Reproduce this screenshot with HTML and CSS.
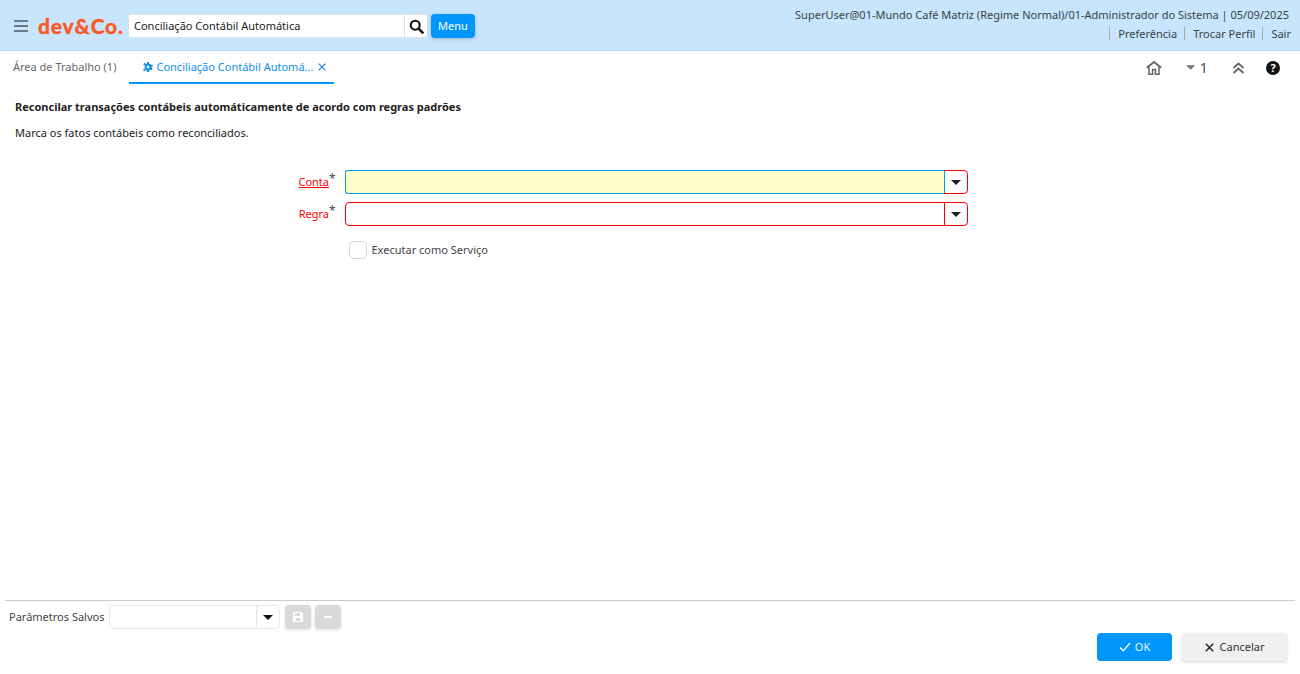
FILE: index.html
```html
<!DOCTYPE html>
<html lang="pt-BR">
<head>
<meta charset="utf-8">
<title>Conciliação Contábil Automática</title>
<link rel="stylesheet" href="styles.css">
</head>
<body>
<header class="topbar">
  <div class="top-left">
    <button class="burger" aria-label="Menu"><svg width="14" height="12" viewBox="0 0 14 12"><path d="M0 1h14M0 6h14M0 11h14" stroke="#4a5560" stroke-width="1.7"/></svg></button>
    <span class="logo">dev&amp;Co.</span>
    <div class="search">
      <span class="search-text">Conciliação Contábil Automática</span>
      <span class="search-btn"><svg width="15" height="15" viewBox="0 0 15 15"><circle cx="6.200" cy="6.200" r="4.500" fill="none" stroke="#111" stroke-width="2.100"/><path d="M9.600 9.600l4 4" stroke="#111" stroke-width="2.600" stroke-linecap="round"/></svg></span>
    </div>
    <button class="menu-btn">Menu</button>
  </div>
  <div class="top-right">
    <div class="user-line">SuperUser@01-Mundo Café Matriz (Regime Normal)/01-Administrador do Sistema | 05/09/2025</div>
    <nav class="links"><a>Preferência</a><a>Trocar Perfil</a><a>Sair</a></nav>
  </div>
</header>
<div class="tabbar">
  <div class="tabs">
    <div class="tab">Área de Trabalho (1)</div>
    <div class="tab tab-active">
      <svg class="gear" width="10" height="10" viewBox="0 0 10 10"><g fill="#0d8fe8"><circle cx="5" cy="5" r="3.400"/><path d="M4 0h2v2H4zM4 8h2v2H4zM.2 2.500l1-1.700 1.800 1-1 1.700zM7 7.200l1-1.700 1.800 1-1 1.700zM0 7.500L1 9.200l1.800-1-1-1.700zM7.200 3.500l1 1.700 1.800-1-1-1.700z"/></g><circle cx="5" cy="5" r="1.400" fill="#fff"/></svg>
      <span class="tab-label">Conciliação Contábil Automá...</span>
      <svg class="tab-x" width="8" height="8" viewBox="0 0 8 8"><path d="M.6.6l6.800 6.800M7.400.6L.6 7.400" stroke="#2a7fd8" stroke-width="1.200"/></svg>
    </div>
  </div>
  <div class="tab-tools">
    <svg class="home" width="16" height="14" viewBox="0 0 16 14"><path d="M.8 6.800L8 1l7.200 5.800" fill="none" stroke="#666" stroke-width="1.900"/><path d="M3 6v7.300h3.600V8.600h2.800v4.700H13V6" fill="none" stroke="#666" stroke-width="1.500"/></svg>
    <span class="count"><svg width="10" height="5" viewBox="0 0 10 5"><path d="M0 0h10L5 5z" fill="#777"/></svg><span>1</span></span>
    <svg width="13" height="12" viewBox="0 0 13 12"><path d="M1.500 6l5-4.500 5 4.500M1.500 11l5-4.500 5 4.500" fill="none" stroke="#666" stroke-width="1.800"/></svg>
    <span class="help">?</span>
  </div>
</div>
<main class="content">
  <h1 class="title">Reconcilar transações contábeis automáticamente de acordo com regras padrões</h1>
  <p class="desc">Marca os fatos contábeis como reconciliados.</p>
  <form class="form">
    <div class="row">
      <label class="lbl"><u>Conta</u><sup>*</sup></label>
      <div class="combo combo-focus"><span class="combo-input"></span><span class="combo-btn"><i class="caret"></i></span></div>
    </div>
    <div class="row">
      <label class="lbl">Regra<sup>*</sup></label>
      <div class="combo"><span class="combo-input"></span><span class="combo-btn"><i class="caret"></i></span></div>
    </div>
    <div class="check-row"><span class="check"></span><span class="check-label">Executar como Serviço</span></div>
  </form>
</main>
<footer class="footer">
  <div class="saved">
    <span class="saved-label">Parâmetros Salvos</span>
    <div class="saved-combo"><span class="saved-input"></span><span class="saved-btn"><i class="caret"></i></span></div>
    <span class="mini"><svg width="10" height="10" viewBox="0 0 10 10"><path fill="#fff" fill-rule="evenodd" d="M0 0h8l2 2v8H0zM2 1v3h5V1zM2.500 6v3h5V6z"/></svg></span>
    <span class="mini"><svg width="8" height="2" viewBox="0 0 8 2"><path d="M0 0h8v2H0z" fill="#fff"/></svg></span>
  </div>
  <div class="actions">
    <button class="btn btn-ok"><svg width="12" height="10" viewBox="0 0 12 10"><path d="M1 5.500l3.300 3.300L11 1" fill="none" stroke="#fff" stroke-width="1.300"/></svg><span>OK</span></button>
    <button class="btn btn-cancel"><svg width="9" height="9" viewBox="0 0 9 9"><path d="M.8.8l7.400 7.400M8.200.8L.8 8.200" stroke="#222" stroke-width="1.400"/></svg><span>Cancelar</span></button>
  </div>
</footer>
</body>
</html>
```
FILE: styles.css
```css
* { box-sizing: border-box; }
html, body { margin: 0; height: 100%; }
body {
  display: flex;
  flex-direction: column;
  height: 674px;
  overflow: hidden;
  background: #fff;
  color: #333;
  font: 11px/15px "Noto Sans", sans-serif;
}
button { font: inherit; border: 0; padding: 0; cursor: pointer; }

.topbar {
  flex: none;
  height: 51px;
  display: flex;
  justify-content: space-between;
  background: #c7e6fe;
  border-bottom: 1px solid #a9d9fd;
  padding: 0 11px 0 14px;
}
.top-left { display: flex; align-items: center; height: 50px; padding-top: 2px; }
.burger { display: flex; background: none; width: 14px; height: 12px; margin-right: 10px; }
.logo {
  font: 900 21px/24px Lato, sans-serif;
  color: #fa5a28;
  width: 90px;
  letter-spacing: .8px;
  -webkit-text-stroke: .3px #fa5a28;
}
.search {
  display: flex;
  width: 300px;
  height: 24px;
  background: #fff;
  border: 1px solid #e2e2e2;
  border-radius: 3px;
}
.search-text { flex: 1; padding-left: 5px; line-height: 22px; color: #222; }
.search-btn { width: 23px; display: flex; align-items: center; justify-content: center; border-left: 1px solid #ddd; }
.menu-btn {
  margin-left: 3px;
  width: 44px;
  height: 24px;
  padding-bottom: 2px;
  background: #0096fd;
  color: #fff;
  border-radius: 4px;
  box-shadow: 0 1px 4px rgba(0,0,0,.2);
}
.top-right { display: flex; flex-direction: column; align-items: flex-end; padding-top: 7px; color: #3a3f44; }
.user-line { height: 19px; }
.links { display: flex; margin-right: -2px; }
.links a { padding-left: 8px; margin-left: 7px; border-left: 1px solid #aaa; height: 13px; line-height: 13px; margin-top: 1px; }

.tabbar {
  flex: none;
  height: 33px;
  display: flex;
  justify-content: space-between;
  padding: 0 20px 0 13px;
}
.tabs { display: flex; }
.tab { color: #666; height: 33px; line-height: 31px; margin-right: 13px; white-space: nowrap; }
.tab-active {
  display: flex;
  align-items: center;
  gap: 3px;
  width: 205px;
  padding: 0 7px 0 14px;
  color: #0d8fe8;
  border-bottom: 2px solid #0096fd;
}
.gear { flex: none; }
.tab-label { flex: none; }
.tab-x { flex: none; margin-left: 2px; }
.tab-tools { display: flex; align-items: center; color: #555; height: 33px; }
.home { margin-right: 24px; margin-left: -1px; }
.count { display: flex; align-items: center; gap: 4px; font-size: 15px; margin-right: 24px; width: 22px; }
.help {
  margin-left: 21px;
  width: 14px;
  height: 14px;
  border-radius: 50%;
  background: #111;
  color: #fff;
  font: 700 11px/14px "Noto Sans", sans-serif;
  text-align: center;
}

.content { flex: 1; padding: 0 15px; }
.title { margin: 15px 0 0; font-size: 11px; line-height: 15px; font-weight: 700; color: #222; }
.desc { margin: 11px 0 0; color: #222; }
.form { margin-top: 30px; }
.row { display: flex; align-items: center; height: 24px; margin-bottom: 8px; }
.lbl { width: 330px; padding: 0 16px 2px 0; text-align: right; color: #f00; position: relative; }
.lbl sup { position: absolute; left: 314px; top: -3px; color: #444; font-size: 12px; line-height: 15px; vertical-align: baseline; }
.combo {
  display: flex;
  width: 623px;
  height: 24px;
  border: 1px solid #f00;
  border-radius: 4px;
  background: #fff;
}
.combo-input { flex: 1; border-radius: 3px 0 0 3px; }
.combo-btn {
  width: 23px;
  display: flex;
  align-items: center;
  justify-content: center;
  border-left: 1px solid #f00;
}
.caret { display: block; width: 0; height: 0; border: 5px solid transparent; border-top: 5px solid #222; border-bottom: 0; }
.combo-focus .combo-input {
  margin: -1px 0 -1px -1px;
  background: #ffffcc;
  border: 1px solid #0096fd;
  border-right: 0;
}
.combo-focus .combo-btn { border-left-color: #0096fd; }
.check-row { display: flex; align-items: center; gap: 4.500px; margin: 15px 0 0 334px; height: 18px; color: #444; }
.check { width: 18px; height: 18px; border: 1px solid #d6d6d6; border-radius: 4px; }
.check-label { margin-top: -2px; }

.footer { flex: none; height: 74px; margin: 0 5px; border-top: 1px solid #ccc; position: relative; }
.saved { display: flex; align-items: center; height: 24px; margin-top: 4px; padding-left: 4px; color: #444; }
.saved-label { margin-top: -2px; }
.saved-combo { display: flex; width: 171px; height: 24px; margin-left: 5px; border: 1px solid #eaeaea; border-radius: 4px; }
.saved-input { flex: 1; }
.saved-btn { width: 23px; display: flex; align-items: center; justify-content: center; border-left: 1px solid #e4e4e4; }
.saved-btn .caret { border-top-color: #111; }
.mini {
  width: 26px;
  height: 24px;
  margin-left: 5px;
  display: flex;
  align-items: center;
  justify-content: center;
  background: #d9d9d9;
  border-radius: 4px;
  box-shadow: 0 1px 3px rgba(0,0,0,.12);
}
.mini + .mini { margin-left: 4px; }
.actions { display: flex; justify-content: flex-end; gap: 10px; margin: 4px 8px 0 0; }
.btn { display: flex; align-items: center; justify-content: center; height: 28px; border-radius: 4px; }
.btn span { margin-top: -2px; }
.btn-ok { width: 75px; gap: 4px; background: #0096fd; color: #e6f4ff; }
.btn-cancel { width: 105px; gap: 6px; background: #f0f0f0; color: #333; box-shadow: 0 1px 3px rgba(0,0,0,.2); }
```
